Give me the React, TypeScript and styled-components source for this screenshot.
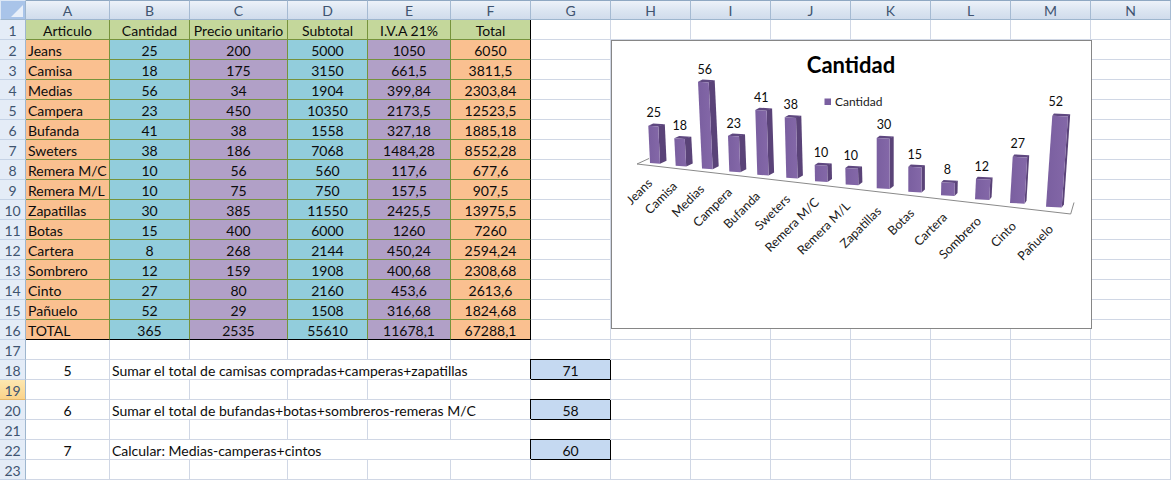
import React from 'react';
import styled, { createGlobalStyle } from 'styled-components';

const GlobalStyle = createGlobalStyle`
  html, body {
    margin: 0;
    padding: 0;
    background: #fff;
    overflow: hidden;
  }
`;

const COLUMN_WIDTHS = [84, 80, 98, 80, 83, 80, 80, 80, 80, 80, 80, 80, 80, 80];
const COLUMN_NAMES = 'ABCDEFGHIJKLMN'.split('');

const Sheet = styled.div`
  position: relative;
  width: 1171px;
  height: 480px;
  overflow: hidden;
  display: grid;
  grid-template-columns: 26px ${COLUMN_WIDTHS.map((w) => `${w}px`).join(' ')};
  grid-auto-rows: 20px;
  font-family: Lato, "Liberation Sans", sans-serif;
  font-size: 14px;
  color: #0c0c0c;
`;

const Corner = styled.div`
  box-sizing: border-box;
  background: #a9c4e9;
  border: 1px solid #dde8f6;
  border-right-color: #9eb6ce;
  border-bottom-color: #9eb6ce;
  display: flex;
  align-items: flex-end;
  justify-content: flex-end;
  padding: 1px;

  svg {
    display: block;
  }
`;

const ColumnHead = styled.div`
  box-sizing: border-box;
  display: flex;
  align-items: center;
  justify-content: center;
  padding-top: 1px;
  background: linear-gradient(#edf2f9, #dbe5f1 55%, #d0dcec);
  border-top: 1px solid #8fa8c2;
  border-right: 1px solid #a5bad2;
  border-bottom: 1px solid #9eb6ce;
  color: #3f5470;
`;

const RowHead = styled.div<{ $active?: boolean }>`
  box-sizing: border-box;
  display: flex;
  align-items: center;
  justify-content: center;
  padding-top: 1px;
  background: ${(p) => (p.$active ? 'linear-gradient(#fde7b0, #fbd38a)' : '#e4ecf7')};
  border-right: 1px solid #9eb6ce;
  border-bottom: 1px solid ${(p) => (p.$active ? '#e4b76a' : '#c5d3e6')};
  color: #3f5470;
`;

type Tone = 'orange' | 'blue' | 'purple' | 'green' | 'answer' | 'none';

const FILLS: Record<Tone, string> = {
  orange: '#fac090',
  blue: '#92cddc',
  purple: '#b1a0c7',
  green: '#c4d79b',
  answer: '#c5d9f1',
  none: '#fff',
};

const Cell = styled.div<{
  $tone?: Tone;
  $left?: boolean;
  $span?: number;
  $closeRight?: boolean;
  $closeBottom?: boolean;
}>`
  box-sizing: border-box;
  display: flex;
  align-items: center;
  justify-content: ${(p) => (p.$left ? 'flex-start' : 'center')};
  padding: 1px 0 0 ${(p) => (p.$left ? '2px' : '0')};
  white-space: nowrap;
  grid-column: ${(p) => (p.$span ? `span ${p.$span}` : 'auto')};
  background: ${(p) => FILLS[p.$tone ?? 'none']};
  border-right: 1px solid
    ${(p) => (p.$closeRight ? '#000' : p.$tone && p.$tone !== 'none' ? '#76933c' : '#d0d7e5')};
  border-bottom: 1px solid
    ${(p) => (p.$closeBottom ? '#000' : p.$tone && p.$tone !== 'none' ? '#76933c' : '#d0d7e5')};
`;

const AnswerCell = styled(Cell)`
  border-right-color: #000;
  border-bottom-color: #000;
  box-shadow: -1px -1px 0 0 #000;
`;

const ChartBox = styled.div`
  position: absolute;
  left: 611px;
  top: 40px;
  width: 481px;
  height: 289px;
  box-sizing: border-box;
  border: 1px solid #868686;
  background: #fff;

  svg {
    display: block;
    font-family: Lato, "Liberation Sans", sans-serif;
  }
`;

const HEADINGS = ['Articulo', 'Cantidad', 'Precio unitario', 'Subtotal', 'I.V.A 21%', 'Total'];

const ROWS: (string | number)[][] = [
  ['Jeans', 25, 200, 5000, '1050', '6050'],
  ['Camisa', 18, 175, 3150, '661,5', '3811,5'],
  ['Medias', 56, 34, 1904, '399,84', '2303,84'],
  ['Campera', 23, 450, 10350, '2173,5', '12523,5'],
  ['Bufanda', 41, 38, 1558, '327,18', '1885,18'],
  ['Sweters', 38, 186, 7068, '1484,28', '8552,28'],
  ['Remera M/C', 10, 56, 560, '117,6', '677,6'],
  ['Remera M/L', 10, 75, 750, '157,5', '907,5'],
  ['Zapatillas', 30, 385, 11550, '2425,5', '13975,5'],
  ['Botas', 15, 400, 6000, '1260', '7260'],
  ['Cartera', 8, 268, 2144, '450,24', '2594,24'],
  ['Sombrero', 12, 159, 1908, '400,68', '2308,68'],
  ['Cinto', 27, 80, 2160, '453,6', '2613,6'],
  ['Pañuelo', 52, 29, 1508, '316,68', '1824,68'],
  ['TOTAL', 365, 2535, 55610, '11678,1', '67288,1'],
];

const TONES: Tone[] = ['orange', 'blue', 'purple', 'blue', 'purple', 'orange'];

const EXERCISES: Record<number, { id: number; text: string; result: number }> = {
  18: { id: 5, text: 'Sumar el total de camisas compradas+camperas+zapatillas', result: 71 },
  20: { id: 6, text: 'Sumar el total de bufandas+botas+sombreros-remeras M/C', result: 58 },
  22: { id: 7, text: 'Calcular: Medias-camperas+cintos', result: 60 },
};

// tlx/tly: front face top-left, blx/bly: front face bottom-left, w: face width, d: side depth
const BARS = [
  { v: 25, name: 'Jeans', tlx: 648.3, tly: 125.7, blx: 650, bly: 163.7, w: 10, d: 6.5, vx: 653.7, vy: 112, nx: 653, ny: 184 },
  { v: 18, name: 'Camisa', tlx: 674.3, tly: 138.3, blx: 675.7, bly: 166.5, w: 10.5, d: 6.5, vx: 679.7, vy: 125.3, nx: 678, ny: 187 },
  { v: 56, name: 'Medias', tlx: 698, tly: 81.7, blx: 702, bly: 169.3, w: 10.7, d: 6, vx: 704.7, vy: 69, nx: 705, ny: 190 },
  { v: 23, name: 'Campera', tlx: 728, tly: 135.7, blx: 729.3, bly: 172.3, w: 11, d: 6, vx: 733.7, vy: 123.3, nx: 733, ny: 193 },
  { v: 41, name: 'Bufanda', tlx: 755.3, tly: 110, blx: 757.3, bly: 175.5, w: 11.3, d: 5.5, vx: 761.3, vy: 97, nx: 761, ny: 197 },
  { v: 38, name: 'Sweters', tlx: 784.7, tly: 117.3, blx: 786.3, bly: 178.5, w: 11.3, d: 5.3, vx: 790.7, vy: 104, nx: 791, ny: 200 },
  { v: 10, name: 'Remera M/C', tlx: 814.7, tly: 165, blx: 815, bly: 182, w: 12.5, d: 4.5, vx: 821, vy: 152, nx: 820, ny: 203 },
  { v: 10, name: 'Remera M/L', tlx: 845.3, tly: 168, blx: 845.7, bly: 185.3, w: 12.7, d: 4, vx: 850.7, vy: 155, nx: 851, ny: 207 },
  { v: 30, name: 'Zapatillas', tlx: 876.7, tly: 138, blx: 876.7, bly: 189, w: 13, d: 4, vx: 884, vy: 124, nx: 882, ny: 212 },
  { v: 15, name: 'Botas', tlx: 908.3, tly: 166.7, blx: 908.3, bly: 192.5, w: 13.3, d: 3.3, vx: 914.7, vy: 154, nx: 915, ny: 214 },
  { v: 8, name: 'Cartera', tlx: 941.3, tly: 182.3, blx: 941, bly: 196, w: 13.5, d: 3, vx: 947.3, vy: 169, nx: 948, ny: 218 },
  { v: 12, name: 'Sombrero', tlx: 976, tly: 179, blx: 975, bly: 200, w: 14.3, d: 2.3, vx: 981.7, vy: 166, nx: 982, ny: 222 },
  { v: 27, name: 'Cinto', tlx: 1012.7, tly: 156.7, blx: 1010, bly: 203.7, w: 14.5, d: 2, vx: 1017.7, vy: 143, nx: 1017, ny: 227 },
  { v: 52, name: 'Pañuelo', tlx: 1052.3, tly: 115.7, blx: 1046, bly: 207.5, w: 15.7, d: 2.2, vx: 1055.7, vy: 101, nx: 1054, ny: 230 },
];

const FLOOR = [[649, 158.5], [637, 164], [1070.7, 214], [1074, 202.5]];

const pts = (...p: number[][]) => p.map((c) => c.join(',')).join(' ');

const Chart = () => (
  <ChartBox>
    <svg width={479} height={287} viewBox="612 41 479 287">
      <defs>
        <linearGradient id="barFront" x1="0" y1="0" x2="1" y2="0">
          <stop offset="0" stopColor="#7a5fa0" />
          <stop offset="1" stopColor="#8468a8" />
        </linearGradient>
      </defs>
      <polyline points={pts(...FLOOR)} fill="none" stroke="#8a8a8a" strokeWidth={1} />
      {BARS.map((b) => (
        <g key={b.name}>
          <polygon
            points={pts(
              [b.tlx + b.w, b.tly],
              [b.tlx + b.w + b.d, b.tly - 1.5],
              [b.blx + b.w + b.d, b.bly - 3],
              [b.blx + b.w, b.bly]
            )}
            fill="#5a4378"
          />
          <polygon
            points={pts(
              [b.tlx, b.tly],
              [b.tlx + b.d * 0.75, b.tly - 2.3],
              [b.tlx + b.w + b.d, b.tly - 1.5],
              [b.tlx + b.w, b.tly + 0.8]
            )}
            fill="#5f4880"
          />
          <polygon
            points={pts(
              [b.tlx, b.tly],
              [b.tlx + b.w, b.tly + 0.8],
              [b.blx + b.w, b.bly],
              [b.blx, b.bly - 0.8]
            )}
            fill="url(#barFront)"
          />
        </g>
      ))}
      {BARS.map((b) => (
        <text key={b.name} x={b.vx} y={b.vy + 4.5} fontSize={12.5} textAnchor="middle" fill="#0c0c0c">
          {b.v}
        </text>
      ))}
      {BARS.map((b) => (
        <text
          key={b.name}
          x={b.nx}
          y={b.ny}
          fontSize={12.5}
          textAnchor="end"
          fill="#1a1a1a"
          transform={`rotate(-45 ${b.nx} ${b.ny})`}
        >
          {b.name}
        </text>
      ))}
      <text x={851} y={73} fontSize={22} fontWeight={700} textAnchor="middle" fill="#000">
        Cantidad
      </text>
      <rect x={824.5} y={98.5} width={6.5} height={6.5} fill="#7a5fa0" />
      <text x={835} y={106} fontSize={12} fill="#1a1a1a">
        Cantidad
      </text>
    </svg>
  </ChartBox>
);

export default function App() {
  const blankRow = (row: number) =>
    COLUMN_NAMES.map((name) => <Cell key={`${name}${row}`} />);

  return (
    <>
      <GlobalStyle />
      <Sheet>
        <Corner>
          <svg width={14} height={14} viewBox="0 0 14 14">
            <polygon points="13,1 13,13 1,13" fill="#e8eff9" />
          </svg>
        </Corner>
        {COLUMN_NAMES.map((name) => (
          <ColumnHead key={name}>{name}</ColumnHead>
        ))}

        <RowHead>1</RowHead>
        {HEADINGS.map((h, i) => (
          <Cell key={h} $tone="green" $closeRight={i === 5}>
            {h}
          </Cell>
        ))}
        {COLUMN_NAMES.slice(6).map((name) => (
          <Cell key={`${name}1`} />
        ))}

        {ROWS.map((row, r) => (
          <React.Fragment key={r}>
            <RowHead>{r + 2}</RowHead>
            {row.map((value, c) => (
              <Cell
                key={c}
                $tone={TONES[c]}
                $left={c === 0}
                $closeRight={c === 5}
                $closeBottom={r === ROWS.length - 1}
              >
                {value}
              </Cell>
            ))}
            {COLUMN_NAMES.slice(6).map((name) => (
              <Cell key={name} />
            ))}
          </React.Fragment>
        ))}

        {[17, 18, 19, 20, 21, 22, 23].map((row) => {
          const exercise = EXERCISES[row];
          return (
            <React.Fragment key={row}>
              <RowHead $active={row === 19}>{row}</RowHead>
              {exercise ? (
                <>
                  <Cell>{exercise.id}</Cell>
                  <Cell $left $span={5}>
                    {exercise.text}
                  </Cell>
                  <AnswerCell $tone="answer">{exercise.result}</AnswerCell>
                  {COLUMN_NAMES.slice(7).map((name) => (
                    <Cell key={name} />
                  ))}
                </>
              ) : (
                blankRow(row)
              )}
            </React.Fragment>
          );
        })}

        <Chart />
      </Sheet>
    </>
  );
}
